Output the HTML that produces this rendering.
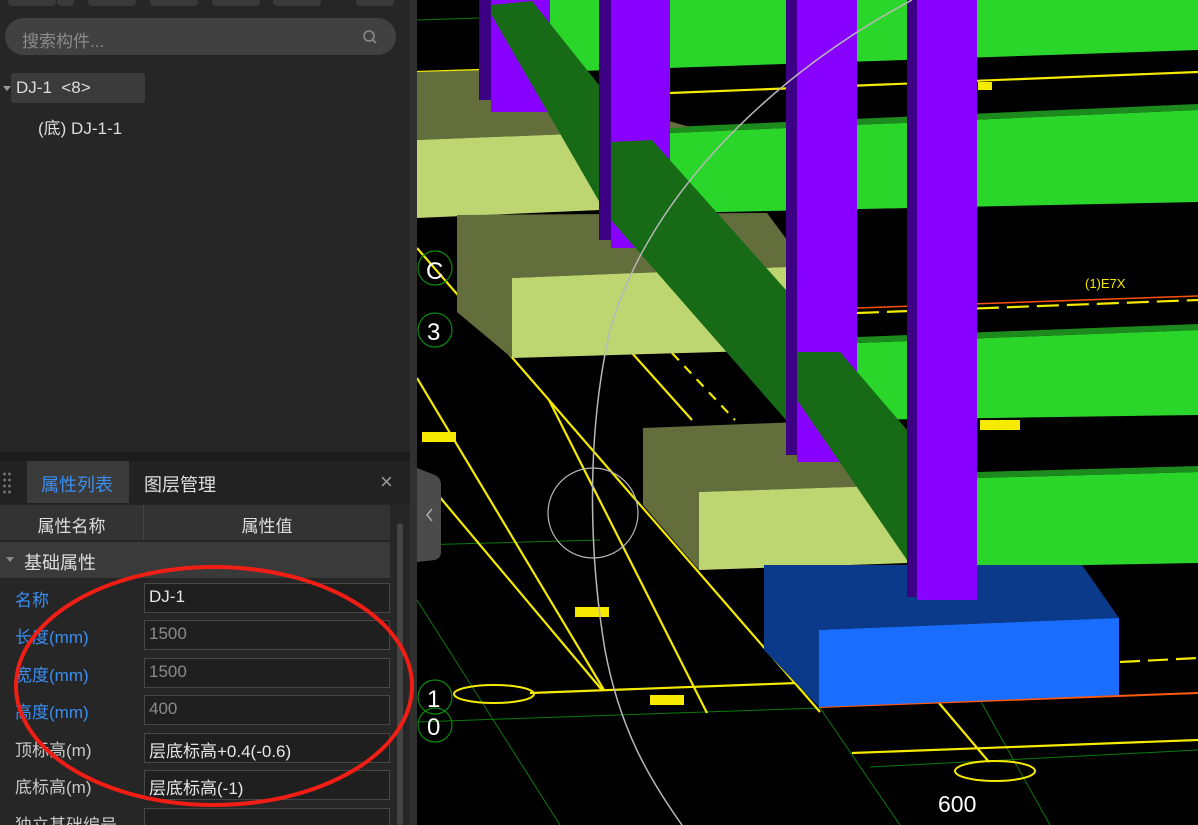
<!DOCTYPE html>
<html style="width:1198px;height:825px;overflow:hidden"><head><meta charset="utf-8"><style>
*{margin:0;padding:0;box-sizing:border-box}
body{width:1198px;height:825px;overflow:hidden;background:#000;font-family:"Liberation Sans","Noto Sans CJK SC",sans-serif;position:relative}
.lp{position:absolute;left:0;top:0;width:417px;height:825px;background:#262626;overflow:hidden}
.abs{position:absolute}
.btn{position:absolute;top:0;height:6px;background:#3a3a3a;border-radius:0 0 4px 4px}
.row{position:absolute;left:0;width:395px;height:37px}
.row .l{position:absolute;left:15px;top:6px;font-size:17px;color:#c8c8c8}
.row .v{position:absolute;left:144px;top:3px;width:246px;height:30px;background:#1f1f1f;border:1px solid #474747;font-size:17px;color:#e6e6e6;padding:3px 0 0 4px}
.blue{color:#3a8ef0!important}
.gray{color:#8a8a8a!important}
</style></head><body>
<svg class="abs" style="left:0;top:0" width="1198" height="825">
<rect x="417" y="0" width="781" height="825" fill="#000"/>
<g stroke="#0b7a0b" stroke-width="1" fill="none">
<line x1="417" y1="20" x2="480" y2="18"/>
<line x1="417" y1="722" x2="820" y2="708"/>
<line x1="417" y1="545" x2="600" y2="540"/>
<line x1="417" y1="600" x2="560" y2="825"/>
<line x1="820" y1="708" x2="900" y2="825"/>
<line x1="870" y1="767" x2="1198" y2="750"/>
<line x1="980" y1="700" x2="1050" y2="825"/>
</g>
<g stroke="#f5ea00" stroke-width="2.2" fill="none">
<line x1="417" y1="72" x2="480" y2="70"/>
<line x1="670" y1="93" x2="1198" y2="72"/>
<line x1="417" y1="248" x2="820" y2="712"/>
<line x1="417" y1="378" x2="604" y2="690"/>
<line x1="417" y1="470" x2="602" y2="690"/>
<line x1="549" y1="400" x2="707" y2="713"/>
<line x1="632" y1="353" x2="692" y2="420"/>
<line x1="672" y1="353" x2="735" y2="420" stroke-dasharray="10,8"/>
<line x1="530" y1="693" x2="797" y2="683"/>
<line x1="852" y1="753" x2="1198" y2="740"/>
<line x1="939" y1="703" x2="989" y2="762"/>
<line x1="857" y1="313" x2="1198" y2="300" stroke-dasharray="22,8"/>
<line x1="1120" y1="662" x2="1198" y2="658" stroke-dasharray="20,8"/>
</g>
<line x1="857" y1="308" x2="1198" y2="296" stroke="#ff5010" stroke-width="1.5"/>
<line x1="819" y1="707" x2="1198" y2="693" stroke="#ff5a10" stroke-width="2"/>
<g fill="#f5ea00">
<rect x="422" y="432" width="34" height="10"/><rect x="575" y="607" width="34" height="10"/><rect x="650" y="695" width="34" height="10"/><rect x="980" y="420" width="40" height="10"/><rect x="978" y="82" width="14" height="8"/>
</g>
<g fill="none" stroke="#f5ea00" stroke-width="2"><ellipse cx="494" cy="694" rx="40" ry="9"/><ellipse cx="995" cy="771" rx="40" ry="10"/></g>
<polygon points="550,0 1198,0 1198,50 550,72" fill="#2bd62b"/>
<polygon points="670,133 1198,110 1198,202 670,213" fill="#2bd62b"/>
<polygon points="670,127 1198,104 1198,110 670,133" fill="#1d8a1d"/>
<polygon points="857,343 1198,330 1198,415 857,420" fill="#2bd62b"/>
<polygon points="857,337 1198,324 1198,330 857,343" fill="#1d8a1d"/>
<polygon points="977,478 1198,472 1198,563 977,567" fill="#2bd62b"/>
<polygon points="977,472 1198,466 1198,472 977,478" fill="#1d8a1d"/>
<polygon points="417,72 490,70 690,127 597,133 417,140" fill="#636e3c"/>
<polygon points="417,140 597,133 600,210 417,218" fill="#bdd672"/>
<polygon points="457,215 767,213 787,240 787,267 512,278 512,358 457,312" fill="#636e3c"/>
<polygon points="512,278 787,267 787,350 512,358" fill="#bdd672"/>
<polygon points="643,428 800,422 907,470 907,485 699,492 699,570 643,505" fill="#636e3c"/>
<polygon points="699,492 907,485 907,563 699,570" fill="#bdd672"/>
<rect x="479" y="0" width="12" height="100" fill="#3d0085"/><rect x="491" y="0" width="59" height="112" fill="#8800ff"/>
<polygon points="491,5 532,1 611,100 611,222 491,14" fill="#176b17"/>
<rect x="599" y="0" width="12" height="240" fill="#3d0085"/><rect x="611" y="0" width="59" height="248" fill="#8800ff"/>
<rect x="786" y="0" width="11" height="455" fill="#3d0085"/><rect x="797" y="0" width="60" height="462" fill="#8800ff"/>
<polygon points="611,142 652,140 786,290 786,420 611,220" fill="#176b17"/>
<polygon points="797,352 840,352 907,430 907,560 797,400" fill="#176b17"/>
<polygon points="764,565 1082,565 1119,618 819,630 819,707 764,650" fill="#0c3a8a"/>
<polygon points="819,630 1119,618 1119,695 819,707" fill="#1a6eff"/>
<rect x="907" y="0" width="10" height="597" fill="#3d0085"/><rect x="917" y="0" width="60" height="600" fill="#8800ff"/>
<path d="M912,0 C780,70 650,190 610,330 C585,440 590,560 605,650 C620,730 650,780 682,825" fill="none" stroke="#b8b8b8" stroke-width="1.5"/>
<circle cx="593" cy="513" r="45" fill="none" stroke="#b8b8b8" stroke-width="1.2"/>
<g fill="none" stroke="#0b8a0b" stroke-width="1.2">
<circle cx="435" cy="268" r="17"/><circle cx="435" cy="330" r="17"/><circle cx="435" cy="697" r="17"/><circle cx="435" cy="725" r="17"/>
</g>
<g fill="#fff" font-size="24" font-family="Liberation Sans,sans-serif">
<text x="426" y="279">C</text><text x="427" y="340">3</text><text x="427" y="707">1</text><text x="427" y="735">0</text>
<text x="938" y="812" font-size="23">600</text>
</g>
<text x="1085" y="288" fill="#f5ea00" font-size="13">(1)E7X</text>
<path d="M417,468 L435,475 Q441,478 441,485 L441,552 Q441,558 435,560 L417,562 Z" fill="#4a4a4a"/>
<path d="M432,509 L427,515 L432,521" stroke="#aaa" stroke-width="1.5" fill="none"/>
</svg>

<div class="lp">
<div class="btn" style="left:8px;width:48px"></div><div class="btn" style="left:57px;width:17px"></div>
<div class="btn" style="left:88px;width:48px"></div><div class="btn" style="left:150px;width:48px"></div>
<div class="btn" style="left:212px;width:48px"></div><div class="btn" style="left:273px;width:48px"></div>
<div class="btn" style="left:356px;width:38px"></div>
<div class="abs" style="left:410px;top:0;width:7px;height:825px;background:#303030"></div>
<div class="abs" style="left:5px;top:18px;width:391px;height:37px;border-radius:19px;background:#414141"></div>
<div class="abs" style="left:22px;top:27px;font-size:17px;color:#8a8a8a">搜索构件...</div>
<svg class="abs" style="left:362px;top:29px" width="16" height="16"><circle cx="7" cy="7" r="5" stroke="#888" stroke-width="1.6" fill="none"/><line x1="11" y1="11" x2="14" y2="14" stroke="#888" stroke-width="1.6"/></svg>
<div class="abs" style="left:11px;top:73px;width:134px;height:30px;border-radius:3px;background:#3b3b3b"></div>
<div class="abs" style="left:3px;top:86px;width:0;height:0;border-left:4px solid transparent;border-right:4px solid transparent;border-top:5px solid #999"></div>
<div class="abs" style="left:16px;top:78px;font-size:17px;color:#dcdcdc">DJ-1&nbsp; &lt;8&gt;</div>
<div class="abs" style="left:38px;top:114px;font-size:17px;color:#dcdcdc">(底) DJ-1-1</div>

<div class="abs" style="left:0;top:452px;width:410px;height:9px;background:#1c1c1c"></div>
<div class="abs" style="left:0;top:461px;width:410px;height:43px;background:#222"></div>
<div class="abs" style="left:2px;top:471px;width:10px;height:24px;background:radial-gradient(circle,#777 1.2px,transparent 1.6px) 0 0/5px 6px"></div>
<div class="abs" style="left:27px;top:461px;width:102px;height:42px;background:#3b3b3b"></div>
<div class="abs" style="left:41px;top:471px;font-size:18px;color:#3a8ef0">属性列表</div>
<div class="abs" style="left:144px;top:471px;font-size:18px;color:#e0e0e0">图层管理</div>
<div class="abs" style="left:380px;top:469px;font-size:22px;color:#999">×</div>
<div class="abs" style="left:0;top:505px;width:390px;height:35px;background:#333"></div>
<div class="abs" style="left:143px;top:505px;width:1px;height:35px;background:#444"></div>
<div class="abs" style="left:0;top:512px;width:143px;text-align:center;font-size:17px;color:#ddd">属性名称</div>
<div class="abs" style="left:144px;top:512px;width:246px;text-align:center;font-size:17px;color:#ddd">属性值</div>
<div class="abs" style="left:0;top:542px;width:390px;height:36px;background:#3a3a3a"></div>
<div class="abs" style="left:6px;top:557px;border-left:4px solid transparent;border-right:4px solid transparent;border-top:5px solid #888"></div>
<div class="abs" style="left:24px;top:549px;font-size:18px;color:#ddd">基础属性</div>
<div class="abs" style="left:397px;top:523px;width:6px;height:302px;border-radius:3px;background:#444"></div>
<div class="row" style="top:580px"><div class="l blue">名称</div><div class="v">DJ-1</div></div>
<div class="row" style="top:617px"><div class="l blue">长度(mm)</div><div class="v gray">1500</div></div>
<div class="row" style="top:655px"><div class="l blue">宽度(mm)</div><div class="v gray">1500</div></div>
<div class="row" style="top:692px"><div class="l blue">高度(mm)</div><div class="v gray">400</div></div>
<div class="row" style="top:730px"><div class="l">顶标高(m)</div><div class="v">层底标高+0.4(-0.6)</div></div>
<div class="row" style="top:767px"><div class="l">底标高(m)</div><div class="v">层底标高(-1)</div></div>
<div class="row" style="top:805px;height:20px;overflow:hidden"><div class="l">独立基础编号</div><div class="v"></div></div>
</div>
<svg class="abs" style="left:0;top:0" width="430" height="825"><ellipse cx="214" cy="686" rx="198" ry="119" fill="none" stroke="#f01e14" stroke-width="4"/></svg>
</body></html>
